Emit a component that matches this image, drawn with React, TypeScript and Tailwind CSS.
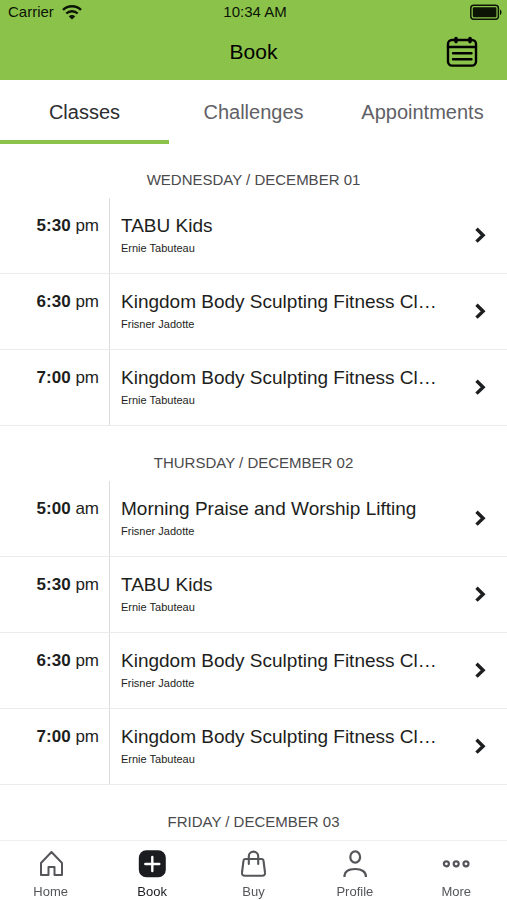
import React, { useState } from 'react';
import clsx from 'clsx';

type ClassItem = { time: string; period: string; title: string; coach: string };

const tabs = ['Classes', 'Challenges', 'Appointments'];

const days: { label: string; items: ClassItem[] }[] = [
  {
    label: 'WEDNESDAY / DECEMBER 01',
    items: [
      { time: '5:30', period: 'pm', title: 'TABU Kids', coach: 'Ernie Tabuteau' },
      { time: '6:30', period: 'pm', title: 'Kingdom Body Sculpting Fitness Cl…', coach: 'Frisner Jadotte' },
      { time: '7:00', period: 'pm', title: 'Kingdom Body Sculpting Fitness Cl…', coach: 'Ernie Tabuteau' },
    ],
  },
  {
    label: 'THURSDAY / DECEMBER 02',
    items: [
      { time: '5:00', period: 'am', title: 'Morning Praise and Worship Lifting', coach: 'Frisner Jadotte' },
      { time: '5:30', period: 'pm', title: 'TABU Kids', coach: 'Ernie Tabuteau' },
      { time: '6:30', period: 'pm', title: 'Kingdom Body Sculpting Fitness Cl…', coach: 'Frisner Jadotte' },
      { time: '7:00', period: 'pm', title: 'Kingdom Body Sculpting Fitness Cl…', coach: 'Ernie Tabuteau' },
    ],
  },
  { label: 'FRIDAY / DECEMBER 03', items: [] },
];

const WifiIcon = () => (
  <svg className="w-5 h-4" viewBox="0 0 20 16" fill="none" stroke="currentColor" strokeWidth="2.4">
    <path d="M1 5.8a13 13 0 0 1 18 0" />
    <path d="M4.3 9.5a8.3 8.3 0 0 1 11.4 0" />
    <path d="M10 15.6 6.8 12.4a4.6 4.6 0 0 1 6.4 0z" fill="currentColor" stroke="none" />
  </svg>
);

const BatteryIcon = () => (
  <svg className="w-8 h-4" viewBox="0 0 32 16" fill="none">
    <rect x="0.8" y="1.300" width="27.6" height="14" rx="3" stroke="currentColor" strokeWidth="1.5" />
    <rect x="2.8" y="3.300" width="23.6" height="10" rx="1.2" fill="currentColor" />
    <path d="M30 5.500c2 1 2 4.600 0 5.600z" fill="currentColor" />
  </svg>
);

const CalendarIcon = () => (
  <svg className="w-8 h-8" viewBox="0 0 32 32" fill="none" stroke="currentColor" strokeWidth="2.4" strokeLinecap="round">
    <rect x="2" y="4" width="28" height="25.600" rx="4" />
    <path d="M2 11h28" />
    <path d="M10 2.600v3M24 2.600v3" strokeWidth="3.600" />
    <path d="M7 17.200h18.500M7 23.200h18.500" />
  </svg>
);

const HomeIcon = () => (
  <svg className="w-7 h-7" viewBox="0 0 28 28" fill="none" stroke="currentColor" strokeWidth="2" strokeLinejoin="round">
    <path d="M14.500 2 4 13v12h7.500v-8h6v8H25V13z" />
  </svg>
);

const BookIcon = () => (
  <svg className="w-7 h-7" viewBox="0 0 28 28" fill="none">
    <rect x="0.800" y="0.200" width="27" height="27" rx="7.500" fill="currentColor" />
    <path d="M14.300 7v14M7.300 14h14" stroke="white" strokeWidth="2.400" strokeLinecap="round" />
  </svg>
);

const BuyIcon = () => (
  <svg className="w-7 h-7" viewBox="0 0 28 28" fill="none" stroke="currentColor" strokeWidth="2.100" strokeLinecap="round" strokeLinejoin="round">
    <path d="M6.500 9h16c1.200 0 1.900.7 2 1.700l1.500 11.800c.3 2-.8 3.200-2.700 3.200H5.700c-1.900 0-3-1.200-2.700-3.200l1.500-11.800c.1-1 .8-1.700 2-1.700z" />
    <path d="M9.800 14V6.300a4.700 4.700 0 0 1 9.400 0V14" />
  </svg>
);

const ProfileIcon = () => (
  <svg className="w-7 h-7" viewBox="0 0 28 28" fill="none" stroke="currentColor" strokeWidth="2.200">
    <ellipse cx="14.200" cy="7" rx="4.900" ry="5.700" />
    <path d="M3.400 27c0-5.300 4.200-8 10.800-8S25 21.700 25 27" />
  </svg>
);

const MoreIcon = () => (
  <svg className="w-7 h-7" viewBox="0 0 28 28" fill="none" stroke="currentColor" strokeWidth="2.200">
    <circle cx="4.400" cy="13.800" r="2.500" />
    <circle cx="14.200" cy="13.800" r="2.500" />
    <circle cx="24" cy="13.800" r="2.500" />
  </svg>
);

const navItems = [
  { label: 'Home', Icon: HomeIcon },
  { label: 'Book', Icon: BookIcon },
  { label: 'Buy', Icon: BuyIcon },
  { label: 'Profile', Icon: ProfileIcon },
  { label: 'More', Icon: MoreIcon },
];

const ClassRow = ({ item }: { item: ClassItem }) => (
  <li className="border-b border-[#ebebeb]">
    <button type="button" className="w-full h-[75px] flex text-left text-[#1d1e20]">
      <span className="w-[110px] shrink-0 self-stretch border-r border-[#dcdcdc] pt-4 pr-[10px] text-right text-[17px] leading-6">
        <b>{item.time}</b> {item.period}
      </span>
      <span className="flex-1 min-w-0 self-stretch pt-4 pl-[11px]">
        <span className="block truncate text-[19px] leading-6">{item.title}</span>
        <span className="block truncate text-[11px] leading-5">{item.coach}</span>
      </span>
      <svg className="w-4 h-5 shrink-0 self-center ml-4 mr-[19px]" viewBox="0 0 16 20" fill="none" stroke="currentColor" strokeWidth="3.400">
        <path d="m4.500 2.800 6.600 6.400-6.600 6.400" />
      </svg>
    </button>
  </li>
);

const App = () => {
  const [activeTab, setActiveTab] = useState('Classes');
  const [activeNav, setActiveNav] = useState('Book');

  return (
    <div className="min-h-screen flex flex-col bg-white font-['Liberation_Sans',Arial,sans-serif]">
      <header className="bg-[#8bc34a] text-black">
        <div className="h-6 pl-2 pr-[5px] flex items-center text-[15px] leading-6 text-[#0c1405]">
          <div className="flex-1 flex items-center gap-2">
            Carrier
            <WifiIcon />
          </div>
          <div>10:34 AM</div>
          <div className="flex-1 flex justify-end">
            <BatteryIcon />
          </div>
        </div>
        <div className="h-14 px-[29px] grid grid-cols-3 items-center">
          <h1 className="col-start-2 text-center text-[21px] leading-6">Book</h1>
          <button type="button" aria-label="Calendar" className="justify-self-end">
            <CalendarIcon />
          </button>
        </div>
      </header>

      <div role="tablist" className="grid grid-cols-3">
        {tabs.map((tab) => (
          <button
            key={tab}
            type="button"
            role="tab"
            aria-selected={activeTab === tab}
            onClick={() => setActiveTab(tab)}
            className={clsx(
              'h-16 pt-1 border-b-4 text-[20px] leading-6',
              activeTab === tab ? 'border-[#8bc34a] text-[#2c2d30]' : 'border-transparent text-[#5f6166]'
            )}
          >
            {tab}
          </button>
        ))}
      </div>

      <main className="flex-1 -mt-px">
        {days.map((day) => (
          <section key={day.label}>
            <h2 className="h-[55px] pt-[27px] text-center text-[15px] leading-5 text-[#4a4a4c]">{day.label}</h2>
            <ul>
              {day.items.map((item) => (
                <ClassRow key={item.time + item.title} item={item} />
              ))}
            </ul>
          </section>
        ))}
      </main>

      <nav className="sticky bottom-0 h-[60px] grid grid-cols-5 bg-white border-t border-[#f0f0f0]">
        {navItems.map(({ label, Icon }) => (
          <button
            key={label}
            type="button"
            onClick={() => setActiveNav(label)}
            className={clsx(
              'flex flex-col items-center pt-[9px] gap-1',
              activeNav === label ? 'text-[#1b1c20]' : 'text-[#55565a]'
            )}
          >
            <Icon />
            <span className="text-[13px] leading-5">{label}</span>
          </button>
        ))}
      </nav>
    </div>
  );
};

export default App;
